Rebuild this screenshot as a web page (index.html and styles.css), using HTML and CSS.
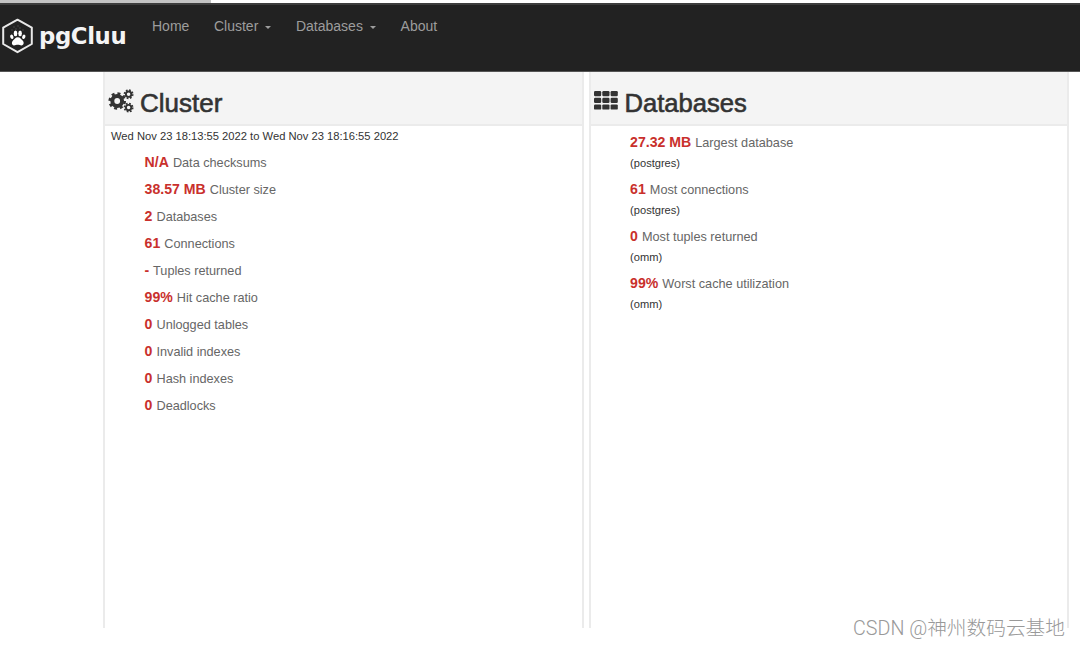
FILE: index.html
```html
<!DOCTYPE html>
<html lang="en">
<head>
  <meta charset="UTF-8">
  <title>pgCluu</title>
  <link rel="stylesheet" href="styles.css">
</head>
<body>

<div class="progress"></div>

<header class="navbar">
  <a class="brand">
    <svg class="brand-logo" viewBox="0 0 32 36">
      <path d="M16 1.7 30.3 9.6V26L16 34.2 1.7 26V9.6Z" fill="none" stroke="#e8e8e8" stroke-width="2" stroke-linejoin="round"/>
      <g fill="#fff">
        <path d="M16.3 19.2c2.5 0 3.3 2 4.8 3.4 1.8 1.7 1.3 4.8-1.1 4.8-1.4 0-2.2-.7-3.7-.7s-2.4.7-3.8.7c-2.4 0-2.7-3.1-1-4.8 1.5-1.4 2.3-3.4 4.8-3.4Z"/>
        <ellipse cx="14" cy="15.4" rx="1.8" ry="2.8"/>
        <ellipse cx="18.6" cy="15.4" rx="1.8" ry="2.8"/>
        <ellipse cx="10.3" cy="18.8" rx="1.6" ry="2.3" transform="rotate(-20 10.3 18.8)"/>
        <ellipse cx="22.3" cy="18.8" rx="1.6" ry="2.3" transform="rotate(20 22.3 18.8)"/>
      </g>
      <path d="M10 12h1m1-3h1m3-1h1m1 2h1m2 2h1M14 11h1" stroke="#666" stroke-width="1"/>
    </svg>
    <span class="brand-name">pgCluu</span>
  </a>
  <nav class="menu">
    <a>Home</a>
    <a>Cluster <i class="caret"></i></a>
    <a>Databases <i class="caret"></i></a>
    <a>About</a>
  </nav>
</header>

<main class="panels">
  <section class="panel">
    <div class="panel-heading">
      <svg class="icon" viewBox="0 0 26 24">
        <g fill="none" stroke="#333">
          <circle cx="9.2" cy="12" r="4.9" stroke-width="4"/>
          <circle cx="9.2" cy="12" r="7.5" stroke-width="2.6" stroke-dasharray="3 2.89"/>
          <circle cx="20.6" cy="5.2" r="2.7" stroke-width="1.9"/>
          <circle cx="20.6" cy="5.2" r="4.1" stroke-width="1.7" stroke-dasharray="1.7 1.52"/>
          <circle cx="20.6" cy="18.6" r="2.7" stroke-width="1.9"/>
          <circle cx="20.6" cy="18.6" r="4.1" stroke-width="1.7" stroke-dasharray="1.7 1.52"/>
        </g>
      </svg>
      <h2>Cluster</h2>
    </div>
    <div class="panel-body">
      <p class="period">Wed Nov 23 18:13:55 2022 to Wed Nov 23 18:16:55 2022</p>
      <ul class="stats">
        <li><b>N/A</b> Data checksums</li>
        <li><b>38.57 MB</b> Cluster size</li>
        <li><b>2</b> Databases</li>
        <li><b>61</b> Connections</li>
        <li><b>-</b> Tuples returned</li>
        <li><b>99%</b> Hit cache ratio</li>
        <li><b>0</b> Unlogged tables</li>
        <li><b>0</b> Invalid indexes</li>
        <li><b>0</b> Hash indexes</li>
        <li><b>0</b> Deadlocks</li>
      </ul>
    </div>
  </section>

  <section class="panel">
    <div class="panel-heading">
      <svg class="icon" viewBox="0 0 26 24">
        <g fill="#333">
          <rect x="0" y="2" width="7.2" height="5.2" rx="1.2"/>
          <rect x="8.3" y="2" width="7.2" height="5.2" rx="1.2"/>
          <rect x="16.6" y="2" width="7.2" height="5.2" rx="1.2"/>
          <rect x="0" y="8.7" width="7.2" height="5.2" rx="1.2"/>
          <rect x="8.3" y="8.7" width="7.2" height="5.2" rx="1.2"/>
          <rect x="16.6" y="8.7" width="7.2" height="5.2" rx="1.2"/>
          <rect x="0" y="15.4" width="7.2" height="5.2" rx="1.2"/>
          <rect x="8.3" y="15.4" width="7.2" height="5.2" rx="1.2"/>
          <rect x="16.6" y="15.4" width="7.2" height="5.2" rx="1.2"/>
        </g>
      </svg>
      <h2 class="narrow">Databases</h2>
    </div>
    <div class="panel-body">
      <ul class="stats tops">
        <li><b>27.32 MB</b> Largest database<small>(postgres)</small></li>
        <li><b>61</b> Most connections<small>(postgres)</small></li>
        <li><b>0</b> Most tuples returned<small>(omm)</small></li>
        <li><b>99%</b> Worst cache utilization<small>(omm)</small></li>
      </ul>
    </div>
  </section>
</main>

<footer class="credit">CSDN @神州数码云基地</footer>

</body>
</html>
```
FILE: styles.css
```css
* {
  box-sizing: border-box;
  margin: 0;
  padding: 0;
}

body {
  width: 1080px;
  height: 647px;
  overflow: hidden;
  background: #fff;
  color: #333;
  font-family: "Liberation Sans", Arial, sans-serif;
}

.progress {
  width: 211px;
  height: 3px;
  background: #c4c4c4;
}

.navbar {
  display: flex;
  height: 69px;
  background: #222;
  border-top: 2px solid #3d3d3d;
  border-bottom: 1px solid #555;
}

.brand {
  display: flex;
  width: 140px;
  padding: 13px 0 0 1px;
}

.brand-logo {
  width: 33px;
  height: 36px;
}

.brand-name {
  margin-left: 5px;
  color: #f4f4f4;
  font: bold 22.8px/37px "DejaVu Sans", sans-serif;
  letter-spacing: -0.4px;
}

.menu {
  display: flex;
  padding-top: 13px;
}

.menu a {
  padding: 0 12.6px 0 12px;
  color: #9d9d9d;
  font-size: 14px;
  line-height: 16px;
  white-space: nowrap;
}

.caret {
  display: inline-block;
  margin: 0 0.2px 0 3px;
  border: 3px solid transparent;
  border-top-color: #9d9d9d;
  border-bottom: 0;
  vertical-align: 2px;
}

.panels {
  display: flex;
  gap: 5px;
  height: 556px;
  padding: 0 11px 0 103px;
}

.panel {
  flex: 1;
  border: solid #ebebeb;
  border-width: 0 2px;
}

.panel-heading {
  display: flex;
  height: 54px;
  padding: 17px 0 0 3px;
  background: #f4f4f4;
  border-bottom: 2px solid #ebebeb;
}

.icon {
  width: 26px;
  height: 24px;
}

h2 {
  margin-left: 6px;
  font-size: 26px;
  font-weight: normal;
  line-height: 29px;
  -webkit-text-stroke: 0.6px #333;
}

h2.narrow {
  margin-left: 5px;
  font-size: 25.6px;
}

.period {
  padding: 3px 0 0 6px;
  font-size: 11.2px;
  line-height: 14px;
}

.stats {
  padding: 6.2px 0 0 39.6px;
  list-style: none;
  color: #666;
  font-size: 12.7px;
}

.stats li {
  height: 26.95px;
  line-height: 26.95px;
}

.stats b {
  margin-right: 0.5px;
  color: #c9302c;
  font-size: 14.1px;
}

.tops {
  padding-top: 6.4px;
}

.tops li {
  height: 46.8px;
  line-height: 20px;
}

.tops small {
  display: block;
  color: #333;
  font-size: 11.1px;
}

.credit {
  margin-top: -11px;
  padding-right: 15px;
  color: #999;
  font: 300 19.7px/24px Roboto, "Noto Sans CJK SC", sans-serif;
  text-align: right;
}
```
